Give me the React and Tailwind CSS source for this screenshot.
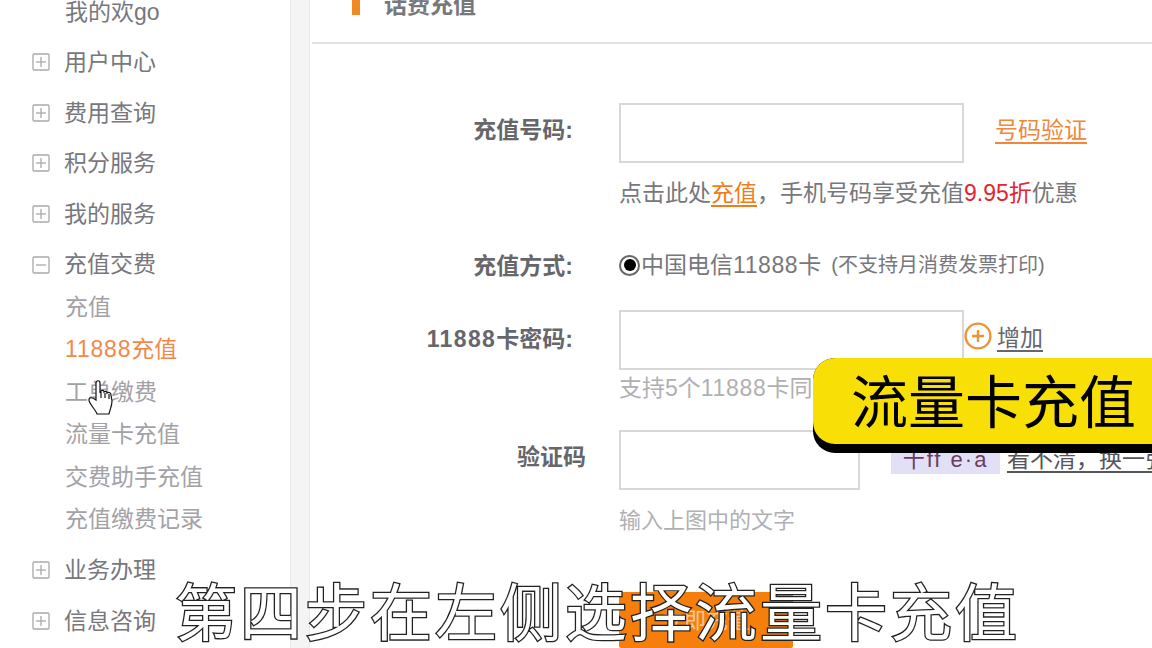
import React from 'react';

const CJK = 'font-["Liberation_Sans","Noto_Sans_CJK_SC",sans-serif]';
const COMMA = '\uFF0C';

const BoxIcon = ({ open }) => (
  <svg width="18" height="18" viewBox="0 0 18 18" className="shrink-0" fill="none" stroke="#a9a9a9" strokeWidth="1.3">
    <rect x="1" y="1" width="16" height="16" rx="1" />
    <path d="M4 9h10" />
    {!open && <path d="M9 4v10" />}
  </svg>
);

const MenuHead = ({ label, open }) => (
  <div className="flex h-[50.6px] items-center gap-[14px] pl-8 text-[23px] text-[#77777c]">
    <BoxIcon open={open} />
    <span>{label}</span>
  </div>
);

const SubItem = ({ children, active }) => (
  <div className={`h-[42.5px] pl-[65px] text-[23px] leading-[42.5px] ${active ? 'text-[#f0894a]' : 'text-[#a2a2a6]'}`}>
    {children}
  </div>
);

function Sidebar() {
  return (
    <div className="h-full w-[290px] shrink-0 bg-white">
      <div className="h-[37px] pl-[65px] text-[23px] leading-[24px] text-[#77777c]">我的欢go</div>
      <MenuHead label="用户中心" />
      <MenuHead label="费用查询" />
      <MenuHead label="积分服务" />
      <MenuHead label="我的服务" />
      <MenuHead label="充值交费" open />
      <div className="-mt-[4px] pb-[4px]">
        <SubItem>充值</SubItem>
        <SubItem active><span className="tracking-[0.8px]">11888</span>充值</SubItem>
        <SubItem>工单缴费</SubItem>
        <SubItem>流量卡充值</SubItem>
        <SubItem>交费助手充值</SubItem>
        <SubItem>充值缴费记录</SubItem>
      </div>
      <MenuHead label="业务办理" />
      <MenuHead label="信息咨询" />
    </div>
  );
}

const Label = ({ children, className }) => (
  <div className={`w-[309px] shrink-0 pr-[46px] text-right text-[23px] font-bold text-[#66666b] ${className}`}>{children}</div>
);

function MainPanel() {
  return (
    <div className="h-full flex-1 bg-white">
      <div className="ml-[2px] flex h-[44px] items-start gap-[24px] border-b-2 border-[#e2e2e2] pl-[40px]">
        <div className="h-[15px] w-[8px] bg-[#f08a24]" />
        <div className="-mt-[9px] text-[23px] font-bold leading-[28px] text-[#77777c]">话费充值</div>
      </div>

      <div className="mt-[59px] flex h-[60px] items-center">
        <Label className="-mt-[5px]">充值号码:</Label>
        <div className="h-[60px] w-[345px] shrink-0 border-2 border-[#d8d8d8]" />
        <a className="-mt-[5px] ml-[31px] text-[23px] text-[#f0873a] underline underline-offset-4">号码验证</a>
      </div>
      <div className="mt-[15px] pl-[309px] text-[23px] leading-[30px] text-[#77777c]">
        点击此处<span className="text-[#ef7d1a] underline underline-offset-4">充值</span>{COMMA}手机号码享受充值<span className="text-[#e3262e]">9.95折</span>优惠
      </div>

      <div className="mt-[42px] flex h-[34px] items-center">
        <Label className="-mt-[1px]">充值方式:</Label>
        <div className="-mt-[4px] flex items-center text-[23px] text-[#77777c]">
          <div className="flex h-[21px] w-[21px] items-center justify-center rounded-full border-2 border-[#666]">
            <div className="h-[12px] w-[12px] rounded-full bg-black" />
          </div>
          <span className="ml-[1px]">中国电信<span className="tracking-[0.6px]">11888</span>卡</span>
          <span className="ml-[10px] text-[20px]">(不支持月消费发票打印)</span>
        </div>
      </div>

      <div className="mt-[26px] flex h-[60px] items-center">
        <Label className="-mt-[1px]"><span className="tracking-[1.4px]">11888</span>卡密码:</Label>
        <div className="h-[60px] w-[345px] shrink-0 border-2 border-[#d8d8d8]" />
        <div className="-mt-[4px] flex items-center text-[23px] text-[#66666b]">
          <svg width="28" height="28" viewBox="0 0 28 28" fill="none" stroke="#ee9337" strokeWidth="2.4" className="-mt-[4px]">
            <circle cx="14" cy="14" r="12.4" />
            <path d="M8 14h12M14 8v12" />
          </svg>
          <span className="ml-[5px] underline underline-offset-4">增加</span>
        </div>
      </div>
      <div className="mt-[3px] pl-[309px] text-[23px] leading-[30px] text-[#b0b0b3]">支持5个<span className="tracking-[0.7px]">11888</span>卡同时充值</div>

      <div className="mt-[27px] flex h-[60px] items-start">
        <div className="mt-[10px] w-[276px] shrink-0 text-right text-[23px] font-bold text-[#66666b]">验证码</div>
        <div className="ml-[33px] h-[60px] w-[241px] shrink-0 border-2 border-[#d8d8d8]" />
        <div className="ml-[31px] flex h-[44px] w-[109px] shrink-0 items-end justify-center bg-[#e2e0f6] pb-[3px] text-[22px] leading-none tracking-[2px] text-[#6d3a63]">
          十ff e·a
        </div>
        <a className="mt-[12px] ml-[7px] shrink-0 whitespace-nowrap text-[23px] text-[#55555a] underline underline-offset-4">看不清{COMMA}换一张</a>
      </div>
      <div className="mt-[16px] pl-[309px] text-[22px] leading-[30px] text-[#b0b0b3]">输入上图中的文字</div>

      <div className="ml-[309px] mt-[56px] flex h-[56px] w-[174px] items-center justify-center rounded-[2px] bg-[#f57f0a] text-[22px] text-[#f6c79a]">
        立即充值
      </div>
    </div>
  );
}

export default function App() {
  return (
    <div className={`relative flex h-[648px] w-[1152px] overflow-hidden bg-white ${CJK}`}>
      <Sidebar />
      <div className="h-full w-[20px] shrink-0 border-x border-[#e8e8e8] bg-[#f4f4f4]" />
      <div className="h-full min-w-0 flex-1 overflow-hidden">
        <MainPanel />
      </div>

      {/* 光标 */}
      <svg width="30" height="38" viewBox="0 0 30 38" className="absolute left-[87px] top-[379px]" fill="#fff" stroke="#111" strokeWidth="1.2">
        <path d="M9 20V4c0-3 4-3 4 0v10l1-2c1-1 3-1 3 1 1-1 3-1 3 1 1-1 4-1 4 2l1 6c0 5-2 8-3 13H10c-1-4-8-10-8-14 0-3 3-3 7 0z" />
        <path d="M14 13v6M18 14v5M22 15v5" />
      </svg>

      {/* 标签 */}
      <div className="absolute left-[813px] top-[358px] flex h-[95px] w-[360px] items-start rounded-[22px] bg-black">
        <div className="flex h-[86px] w-full items-center rounded-[22px] bg-[#f8df06] pl-[38px] pt-[4px] text-[57px] leading-none text-black">
          流量卡充值
        </div>
      </div>

      {/* 字幕 */}
      <div className="absolute left-[175px] top-[579px] whitespace-nowrap text-[62px] leading-[72px] tracking-[3px] text-white [-webkit-text-stroke:2.6px_#222] [paint-order:stroke_fill]">
        第四步在左侧选择流量卡充值
      </div>
    </div>
  );
}
